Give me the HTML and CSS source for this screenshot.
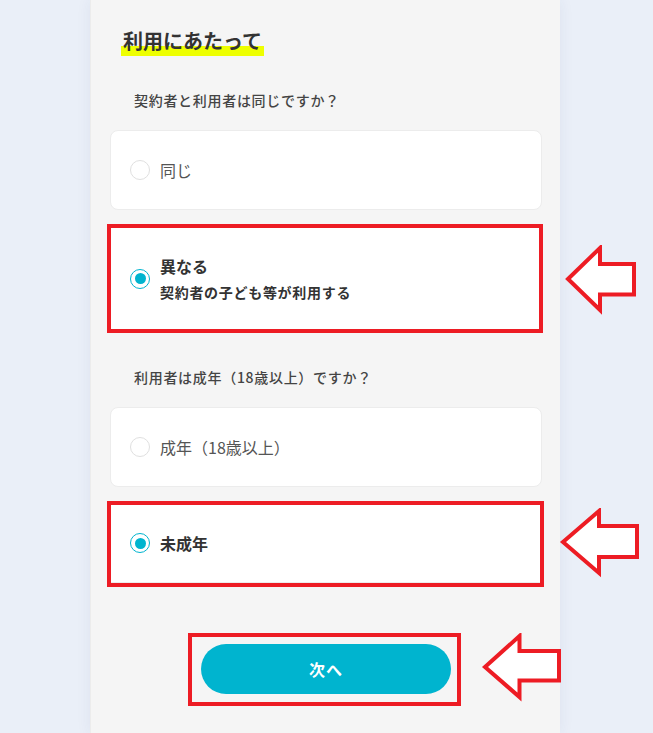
FILE: index.html
```html
<!DOCTYPE html>
<html lang="ja">
<head>
<meta charset="utf-8">
<title>利用にあたって</title>
<link rel="stylesheet" href="styles.css">
</head>
<body>
<div class="page">
  <main class="panel">
    <h2 class="heading"><span class="marker">利用にあたって</span></h2>

    <p class="question q1">契約者と利用者は同じですか？</p>
    <div class="options">
      <label class="option">
        <span class="radio"></span>
        <span class="label">同じ</span>
      </label>
      <label class="option selected annot annot-a">
        <span class="radio"></span>
        <span class="texts">
          <span class="label">異なる</span>
          <span class="sub">契約者の子ども等が利用する</span>
        </span>
      </label>
    </div>

    <p class="question q2">利用者は成年（18歳以上）ですか？</p>
    <div class="options">
      <label class="option">
        <span class="radio"></span>
        <span class="label">成年（18歳以上）</span>
      </label>
      <label class="option selected annot annot-b">
        <span class="radio"></span>
        <span class="label">未成年</span>
      </label>
    </div>

    <div class="actions">
      <button class="next annot annot-c" type="button">次へ</button>
    </div>
  </main>

  <svg class="arrow arrow-1" width="74" height="70" viewBox="0 0 74 70">
    <polygon points="4,34 36,3 36,19 70,19 70,49.5 36,49.5 36,65" />
  </svg>
  <svg class="arrow arrow-2" width="82" height="70" viewBox="0 0 82 70">
    <polygon points="4,34 40,3 40,18 78,18 78,49 40,49 40,65" />
  </svg>
  <svg class="arrow arrow-3" width="82" height="70" viewBox="0 0 82 70">
    <polygon points="4,34 38.5,3 38.5,18 78,18 78,47.5 38.5,47.5 38.5,64" />
  </svg>
</div>
</body>
</html>
```

FILE: styles.css
```css
* {
  box-sizing: border-box;
}

html, body {
  margin: 0;
  padding: 0;
}

body {
  background: #eaeff8;
  font-family: "Noto Sans CJK JP", "Noto Sans", sans-serif;
  color: #333;
}

.page {
  position: relative;
  width: 653px;
  height: 733px;
  overflow: hidden;
}

.panel {
  margin-left: 90px;
  width: 470px;
  min-height: 733px;
  background: #f5f5f5;
  padding: 26px 18px 40px 19px;
  box-shadow: 0 0 14px rgba(40, 60, 120, 0.07);
  border-left: 1px solid #ececec;
}

.heading {
  margin: 0 0 0 11px;
  font-size: 20px;
  font-weight: 700;
  line-height: 30px;
  height: 30px;
}

.marker {
  display: inline-block;
  height: 30px;
  padding: 0 2px;
  color: #333;
  background: linear-gradient(to bottom, transparent 67%, #eeff00 67%);
}

.question {
  margin: 33px 0 19px 24px;
  font-size: 14px;
  line-height: 22px;
  font-weight: 500;
  letter-spacing: 0.05em;
  color: #444;
}

.q2 {
  margin-top: 35px;
}

.options {
  display: flex;
  flex-direction: column;
  gap: 16px;
}

.option {
  position: relative;
  display: flex;
  align-items: center;
  gap: 10px;
  background: #fff;
  border: 1px solid #ececec;
  border-radius: 8px;
  padding: 27px 19px;
}

.radio {
  flex: none;
  width: 20px;
  height: 20px;
  border-radius: 50%;
  border: 1px solid #e0e0e0;
  background: #fff;
  position: relative;
}

.selected .radio {
  border: 1.5px solid #00b4cf;
}

.selected .radio::after {
  content: "";
  position: absolute;
  left: 50%;
  top: 50%;
  width: 11px;
  height: 11px;
  margin: -5.5px 0 0 -5.5px;
  border-radius: 50%;
  background: #00b4cf;
}

.texts {
  display: flex;
  flex-direction: column;
}

.label {
  font-size: 16px;
  line-height: 24px;
  color: #555;
}

.selected .label {
  font-weight: 700;
  color: #333;
}

.sub {
  margin-top: 4px;
  font-size: 14px;
  line-height: 21px;
  font-weight: 700;
  letter-spacing: 0.05em;
  color: #333;
}

.actions {
  display: flex;
  justify-content: center;
  margin-top: 61px;
}

.next {
  position: relative;
  width: 250px;
  height: 50px;
  border: none;
  border-radius: 25px;
  background: #00b4cf;
  color: #fff;
  font-family: "Noto Sans CJK JP", "Noto Sans", sans-serif;
  font-size: 16px;
  font-weight: 700;
  letter-spacing: 0.06em;
  cursor: pointer;
}

/* red annotation frames drawn over the content */
.annot::after {
  content: "";
  position: absolute;
  border: 4px solid #ed1c24;
  pointer-events: none;
}

.annot-a::after {
  top: -3px;
  bottom: -3px;
  left: -4px;
  right: -2px;
}

.annot-b::after {
  top: -3px;
  bottom: -5px;
  left: -4px;
  right: -3px;
}

.annot-c::after {
  top: -11px;
  bottom: -12px;
  left: -13px;
  right: -10px;
}

.option.annot {
  border-radius: 0;
}

/* annotation arrows */
.arrow {
  position: absolute;
}

.arrow polygon {
  fill: #fff;
  stroke: #ed1c24;
  stroke-width: 4;
  stroke-linejoin: miter;
}

.arrow-1 {
  left: 564px;
  top: 245px;
}

.arrow-2 {
  left: 559px;
  top: 508px;
}

.arrow-3 {
  left: 481px;
  top: 633px;
}
```
